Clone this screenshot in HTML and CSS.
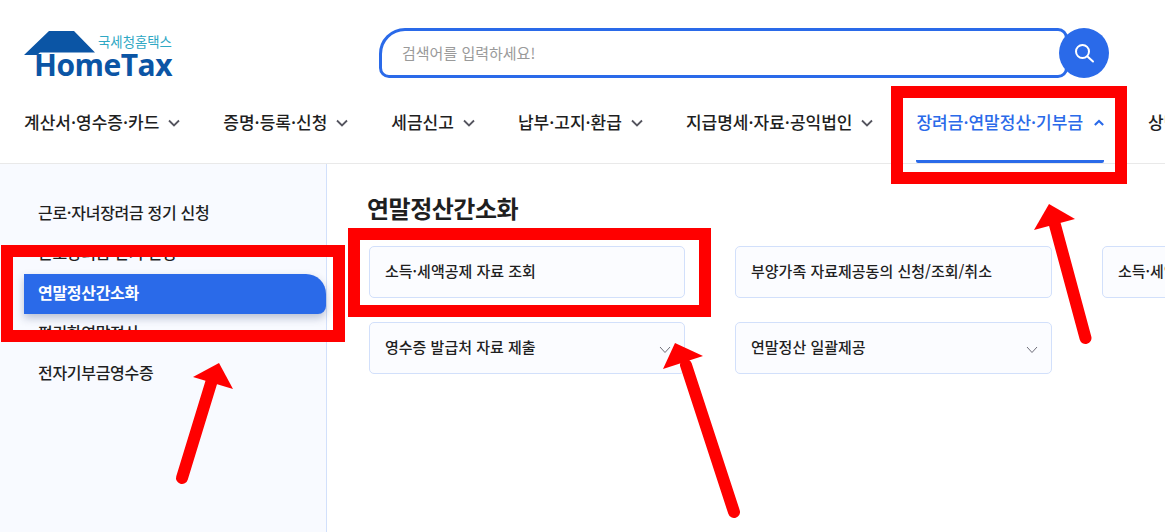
FILE: index.html
```html
<!DOCTYPE html>
<html lang="ko">
<head>
<meta charset="utf-8">
<title>HomeTax</title>
<link rel="stylesheet" href="styles.css">
</head>
<body>
<div class="page">
  <header class="header">
    <div class="top">
      <a class="logo">
        <svg class="roof" width="72" height="26" viewBox="0 0 72 26"><path d="M0 25 25 1H50L71 22.500H16L13 25Z" fill="#0b55a5"/></svg>
        <span class="logo-ko">국세청홈택스</span>
        <span class="logo-en">HomeTax</span>
      </a>
      <form class="search">
        <div class="search-field">검색어를 입력하세요!</div>
        <button class="search-btn" type="button" aria-label="검색">
          <svg width="24" height="24" viewBox="0 0 24 24" fill="none" stroke="#fff" stroke-width="2"><circle cx="10.5" cy="10.5" r="6.500"/><path d="M15.500 15.500 21 20.500" stroke-linecap="round"/></svg>
        </button>
      </form>
    </div>
    <nav class="nav">
      <a class="nav-item">계산서·영수증·카드<svg class="chev" viewBox="0 0 12 8"><path d="M1 1.500 6 6.500 11 1.500"/></svg></a>
      <a class="nav-item">증명·등록·신청<svg class="chev" viewBox="0 0 12 8"><path d="M1 1.500 6 6.500 11 1.500"/></svg></a>
      <a class="nav-item">세금신고<svg class="chev" viewBox="0 0 12 8"><path d="M1 1.500 6 6.500 11 1.500"/></svg></a>
      <a class="nav-item">납부·고지·환급<svg class="chev" viewBox="0 0 12 8"><path d="M1 1.500 6 6.500 11 1.500"/></svg></a>
      <a class="nav-item">지급명세·자료·공익법인<svg class="chev" viewBox="0 0 12 8"><path d="M1 1.500 6 6.500 11 1.500"/></svg></a>
      <a class="nav-item active">장려금·연말정산·기부금<svg class="chev" viewBox="0 0 12 8"><path d="M1 6.500 6 1.500 11 6.500"/></svg></a>
      <a class="nav-item">상담·불복·고충·제보</a>
    </nav>
  </header>
  <div class="body">
    <aside class="side">
      <a class="side-item">근로·자녀장려금 정기 신청</a>
      <a class="side-item">근로장려금 반기 신청</a>
      <a class="side-item current">연말정산간소화</a>
      <a class="side-item">편리한연말정산</a>
      <a class="side-item">전자기부금영수증</a>
    </aside>
    <main class="main">
      <h2 class="title">연말정산간소화</h2>
      <div class="grid">
        <a class="card">소득·세액공제 자료 조회</a>
        <a class="card">부양가족 자료제공동의 신청/조회/취소</a>
        <a class="card">소득·세액공제 증명서류</a>
        <a class="card">영수증 발급처 자료 제출<svg class="card-chev" viewBox="0 0 12 8"><path d="M1 1 6 6.500 11 1"/></svg></a>
        <a class="card">연말정산 일괄제공<svg class="card-chev" viewBox="0 0 12 8"><path d="M1 1 6 6.500 11 1"/></svg></a>
      </div>
    </main>
  </div>
  <svg class="marks" width="1165" height="532" viewBox="0 0 1165 532">
    <g fill="none" stroke="#f00" stroke-width="12">
      <rect x="897" y="92" width="224" height="86"/>
      <rect x="7" y="251" width="332" height="85"/>
      <rect x="354" y="234" width="351" height="77"/>
    </g>
    <g stroke="#f00" stroke-width="12" stroke-linecap="round">
      <path d="M182 478 212 380"/>
      <path d="M734 512 686 365"/>
      <path d="M1085.500 338 1055 225"/>
    </g>
    <g fill="#f00">
      <path d="M219 363 193 377 233 389Z"/>
      <path d="M675 343 663 369 703 356Z"/>
      <path d="M1049 204 1034 230 1075 219Z"/>
    </g>
  </svg>
</div>
</body>
</html>
```
FILE: styles.css
```css
* { box-sizing: border-box; }
html, body { margin: 0; padding: 0; }
body {
  background: #fff;
  color: #1f1f1f;
  font-family: "Noto Sans CJK KR", "Noto Sans", sans-serif;
}
.page {
  position: relative;
  width: 1165px;
  height: 532px;
  overflow: hidden;
}
.header {
  height: 164px;
  border-bottom: 1px solid #e9e9e9;
  display: flex;
  flex-direction: column;
}
.top {
  height: 94px;
  padding: 28px 0 0 24px;
  display: flex;
}
.logo {
  position: relative;
  width: 355px;
  height: 52px;
  display: block;
}
.roof { position: absolute; left: 0; top: 2px; }
.logo-ko {
  position: absolute;
  left: 74px;
  top: 6px;
  font-size: 13.4px;
  line-height: 14px;
  color: #2fa8c4;
}
.logo-en {
  position: absolute;
  left: 10px;
  top: 26px;
  font-family: "Open Sans", sans-serif;
  font-weight: 700;
  font-size: 30px;
  line-height: 22px;
  letter-spacing: -0.5px;
  color: #0b55a5;
}
.search {
  width: 730px;
  height: 50px;
  display: flex;
  align-items: center;
}
.search-field {
  width: 689px;
  height: 50px;
  margin-right: -9px;
  padding-left: 20px;
  border: 3px solid #2a6ae9;
  border-radius: 26px 10px 10px 10px;
  font-size: 15px;
  line-height: 44px;
  color: #9a9a9a;
}
.search-btn {
  position: relative;
  width: 50px;
  height: 50px;
  padding: 0;
  border: 0;
  border-radius: 50%;
  background: #2a6ae9;
  display: flex;
  align-items: center;
  justify-content: center;
}
.nav {
  flex: 1;
  padding-left: 24px;
  display: flex;
  white-space: nowrap;
}
.nav-item {
  height: 69px;
  margin-right: 43px;
  padding-top: 16px;
  font-size: 17px;
  line-height: 24px;
  font-weight: 500;
  color: #1f1f1f;
  display: flex;
  align-items: flex-start;
}
.chev {
  width: 12px;
  height: 8px;
  margin: 9px 0 0 9px;
  fill: none;
  stroke: #55555f;
  stroke-width: 1.8;
}
.nav-item.active {
  margin-right: 44px;
  color: #2a6ae9;
  border-bottom: 3px solid #2a6ae9;
  border-radius: 0 0 2px 2px;
}
.nav-item.active .chev {
  width: 10px;
  margin-left: 11px;
  stroke: #2a6ae9;
  stroke-width: 2.5;
}
.body {
  height: 368px;
  display: flex;
}
.side {
  width: 327px;
  padding: 30px 0 0 24px;
  background: #f8faff;
  border-right: 1px solid #d2e0fb;
  display: flex;
  flex-direction: column;
}
.side-item {
  height: 40px;
  padding-left: 14px;
  font-size: 16px;
  line-height: 36px;
  font-weight: 500;
  letter-spacing: -0.3px;
  color: #1f1f1f;
}
.side-item.current {
  background: #2a6ae9;
  color: #fff;
  font-weight: 700;
  border-radius: 0 20px 8px 0;
  box-shadow: 0 4px 8px rgba(40, 60, 110, 0.3);
}
.main {
  flex: 1;
  padding: 26px 0 0 40px;
  min-width: 0;
}
.title {
  margin: 0 0 20px;
  font-size: 24px;
  line-height: 36px;
  font-weight: 700;
  letter-spacing: -0.5px;
  color: #1f1f1f;
}
.grid {
  margin-left: 2px;
  display: grid;
  grid-template-columns: 316px 317px 316px;
  grid-auto-rows: 52px;
  column-gap: 50px;
  row-gap: 24px;
}
.card {
  position: relative;
  padding-left: 15px;
  background: #fbfcff;
  border: 1px solid #d2e0fb;
  border-radius: 5px;
  font-size: 15px;
  line-height: 48px;
  font-weight: 500;
  white-space: nowrap;
  overflow: hidden;
  color: #1f1f1f;
}
.card-chev {
  position: absolute;
  right: 13px;
  top: 23px;
  width: 12px;
  height: 8px;
  fill: none;
  stroke: #6d6d78;
  stroke-width: 1;
}
.marks {
  position: absolute;
  left: 0;
  top: 0;
  pointer-events: none;
}
```
